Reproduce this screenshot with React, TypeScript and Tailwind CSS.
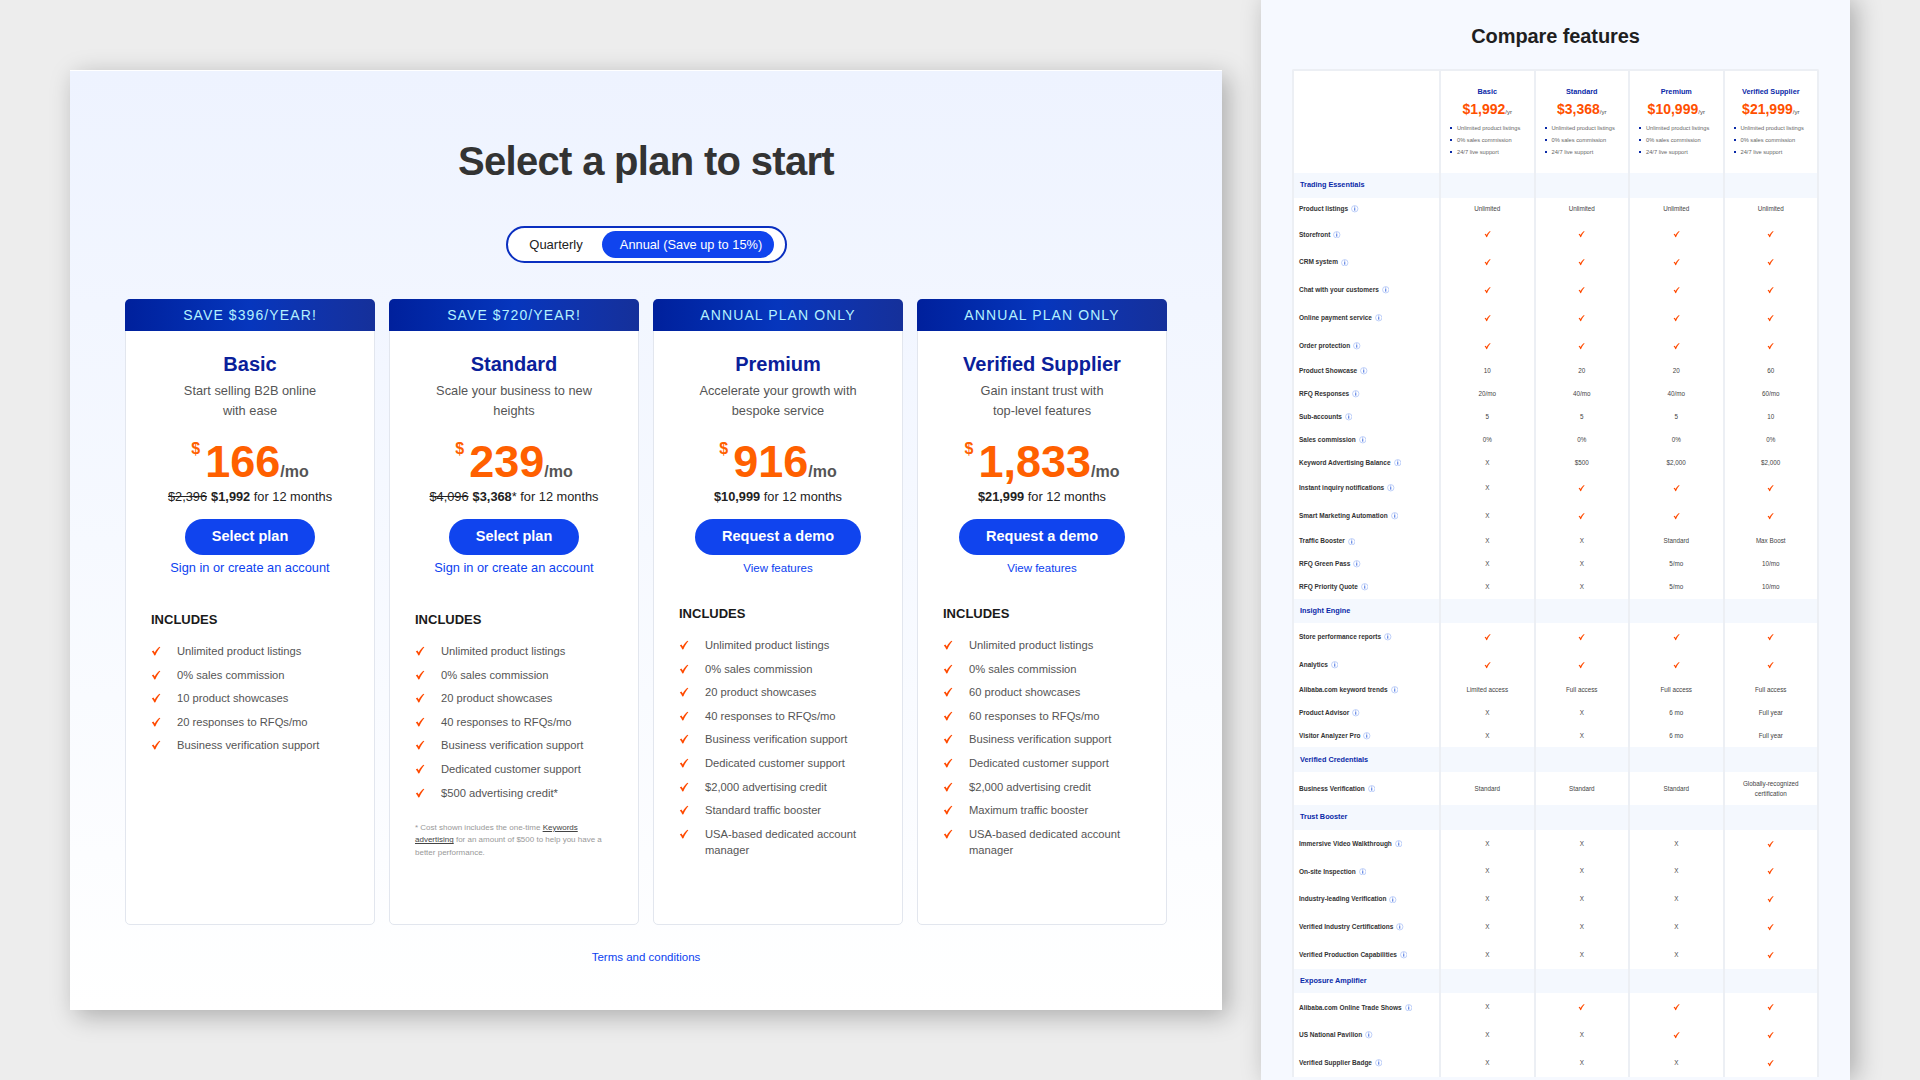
const CHECK = '✓';

const plans = [
  {
    banner: 'SAVE $396/YEAR!',
    name: 'Basic',
    desc: ['Start selling B2B online', 'with ease'],
    price: '166',
    was: '$2,396',
    total: '$1,992',
    star: false,
    cta: 'Select plan',
    link: 'Sign in or create an account',
    features: ['Unlimited product listings', '0% sales commission', '10 product showcases', '20 responses to RFQs/mo', 'Business verification support'],
  },
  {
    banner: 'SAVE $720/YEAR!',
    name: 'Standard',
    desc: ['Scale your business to new', 'heights'],
    price: '239',
    was: '$4,096',
    total: '$3,368',
    star: true,
    cta: 'Select plan',
    link: 'Sign in or create an account',
    features: ['Unlimited product listings', '0% sales commission', '20 product showcases', '40 responses to RFQs/mo', 'Business verification support', 'Dedicated customer support', '$500 advertising credit*'],
    footnote: true,
  },
  {
    banner: 'ANNUAL PLAN ONLY',
    name: 'Premium',
    desc: ['Accelerate your growth with', 'bespoke service'],
    price: '916',
    total: '$10,999',
    star: false,
    cta: 'Request a demo',
    link: 'View features',
    features: ['Unlimited product listings', '0% sales commission', '20 product showcases', '40 responses to RFQs/mo', 'Business verification support', 'Dedicated customer support', '$2,000 advertising credit', 'Standard traffic booster', 'USA-based dedicated account manager'],
  },
  {
    banner: 'ANNUAL PLAN ONLY',
    name: 'Verified Supplier',
    desc: ['Gain instant trust with', 'top-level features'],
    price: '1,833',
    total: '$21,999',
    star: false,
    cta: 'Request a demo',
    link: 'View features',
    features: ['Unlimited product listings', '0% sales commission', '60 product showcases', '60 responses to RFQs/mo', 'Business verification support', 'Dedicated customer support', '$2,000 advertising credit', 'Maximum traffic booster', 'USA-based dedicated account manager'],
  },
];

const columns = [
  { name: 'Basic', price: '$1,992' },
  { name: 'Standard', price: '$3,368' },
  { name: 'Premium', price: '$10,999' },
  { name: 'Verified Supplier', price: '$21,999' },
];

const sections: { title: string; rows: [string, string[]][] }[] = [
  {
    title: 'Trading Essentials',
    rows: [
      ['Product listings', ['Unlimited', 'Unlimited', 'Unlimited', 'Unlimited']],
      ['Storefront', [CHECK, CHECK, CHECK, CHECK]],
      ['CRM system', [CHECK, CHECK, CHECK, CHECK]],
      ['Chat with your customers', [CHECK, CHECK, CHECK, CHECK]],
      ['Online payment service', [CHECK, CHECK, CHECK, CHECK]],
      ['Order protection', [CHECK, CHECK, CHECK, CHECK]],
      ['Product Showcase', ['10', '20', '20', '60']],
      ['RFQ Responses', ['20/mo', '40/mo', '40/mo', '60/mo']],
      ['Sub-accounts', ['5', '5', '5', '10']],
      ['Sales commission', ['0%', '0%', '0%', '0%']],
      ['Keyword Advertising Balance', ['X', '$500', '$2,000', '$2,000']],
      ['Instant inquiry notifications', ['X', CHECK, CHECK, CHECK]],
      ['Smart Marketing Automation', ['X', CHECK, CHECK, CHECK]],
      ['Traffic Booster', ['X', 'X', 'Standard', 'Max Boost']],
      ['RFQ Green Pass', ['X', 'X', '5/mo', '10/mo']],
      ['RFQ Priority Quote', ['X', 'X', '5/mo', '10/mo']],
    ],
  },
  {
    title: 'Insight Engine',
    rows: [
      ['Store performance reports', [CHECK, CHECK, CHECK, CHECK]],
      ['Analytics', [CHECK, CHECK, CHECK, CHECK]],
      ['Alibaba.com keyword trends', ['Limited access', 'Full access', 'Full access', 'Full access']],
      ['Product Advisor', ['X', 'X', '6 mo', 'Full year']],
      ['Visitor Analyzer Pro', ['X', 'X', '6 mo', 'Full year']],
    ],
  },
  {
    title: 'Verified Credentials',
    rows: [['Business Verification', ['Standard', 'Standard', 'Standard', 'Globally-recognized certification']]],
  },
  {
    title: 'Trust Booster',
    rows: [
      ['Immersive Video Walkthrough', ['X', 'X', 'X', CHECK]],
      ['On-site Inspection', ['X', 'X', 'X', CHECK]],
      ['Industry-leading Verification', ['X', 'X', 'X', CHECK]],
      ['Verified Industry Certifications', ['X', 'X', 'X', CHECK]],
      ['Verified Production Capabilities', ['X', 'X', 'X', CHECK]],
    ],
  },
  {
    title: 'Exposure Amplifier',
    rows: [
      ['Alibaba.com Online Trade Shows', ['X', CHECK, CHECK, CHECK]],
      ['US National Pavilion', ['X', 'X', CHECK, CHECK]],
      ['Verified Supplier Badge', ['X', 'X', 'X', CHECK]],
    ],
  },
];

function Tick({ className }: { className: string }) {
  return (
    <svg viewBox="0 0 12 12" className={className} fill="#ff4a00">
      <path d="M1 6.6 L2.9 5.4 L4.5 7.7 C6 4.8 8 2.4 10.4 .8 L11.2 1.5 C8.8 4 6.8 7.4 5.3 11.2 L4 11.4 C3.3 9.4 2.2 7.8 1 6.6Z" />
    </svg>
  );
}

function Info() {
  return (
    <svg viewBox="0 0 8 8" className="ml-[3px] h-[7.5px] w-[7.5px] shrink-0" fill="none">
      <circle cx="4" cy="4" r="3.4" stroke="#a9c0f7" strokeWidth=".8" />
      <path d="M4 3.3 V6" stroke="#2f5fdc" strokeWidth="1" />
      <circle cx="4" cy="2.2" r=".55" fill="#2f5fdc" />
    </svg>
  );
}

function PlanCard({ plan }: { plan: (typeof plans)[number] }) {
  const demo = plan.cta === 'Request a demo';
  return (
    <div className="flex h-[626px] w-[250px] flex-col rounded-[5px] border border-[#e2e6ee] bg-white">
      <div className="-mx-px -mt-px flex h-[32px] shrink-0 items-center justify-center rounded-t-[5px] bg-gradient-to-r from-[#00209c] via-[#0636bd] to-[#15309a] text-[14px] tracking-[1.1px] text-[#b4f1ff]">
        {plan.banner}
      </div>
      <div className="flex flex-col items-center text-center">
        <div className="mt-[21px] h-[24px] text-[20px] leading-[24px] font-bold text-[#0a209a]">{plan.name}</div>
        <div className="mt-[5px] text-[12.8px] leading-[19.5px] text-[#555]">
          {plan.desc[0]}
          <br />
          {plan.desc[1]}
        </div>
        <div className="mt-[19px] flex h-[46px] items-baseline justify-center">
          <span className="mt-[1px] mr-[5px] self-start text-[16px] leading-[18px] font-bold text-[#ff6000]">$</span>
          <span className="text-[45px] leading-[46px] font-bold text-[#ff6000]">{plan.price}</span>
          <span className="text-[16px] font-bold text-[#555]">/mo</span>
        </div>
        <div className="mt-[4px] text-[12.8px] leading-[16px] text-[#222]">
          {plan.was && <span className="mr-[4px] line-through">{plan.was}</span>}
          <span className="font-bold">{plan.total}</span>
          {plan.star && '*'} for 12 months
        </div>
        <button
          className={`mt-[14px] h-[36px] rounded-full bg-[#1044ee] text-[14.5px] font-bold text-white ${demo ? 'w-[166px]' : 'w-[130px]'}`}
        >
          {plan.cta}
        </button>
        <a className={`mt-[5px] leading-[16px] text-[#0b3ff0] ${demo ? 'text-[11.5px]' : 'text-[12.8px]'}`}>{plan.link}</a>
      </div>
      <div className={`px-[25px] ${demo ? 'mt-[30px]' : 'mt-[36px]'}`}>
        <div className="text-[13px] leading-[16px] font-bold text-[#1a1a1a]">INCLUDES</div>
        <ul className="mt-[15px]">
          {plan.features.map((f) => (
            <li key={f} className="mb-[7.6px] flex text-[11.2px] leading-[16px] text-[#555]">
              <Tick className="mt-[3px] mr-[16px] h-[10px] w-[10px] shrink-0" />
              <span>{f}</span>
            </li>
          ))}
        </ul>
        {plan.footnote && (
          <p className="mt-[21px] text-[8px] leading-[12.8px] text-[#999]">
            * Cost shown includes the one-time <span className="text-[#444] underline">Keywords</span>{' '}
            <span className="text-[#444] underline">advertising</span> for an amount of $500 to help you have a better performance.
          </p>
        )}
      </div>
    </div>
  );
}

function ValueCell({ value }: { value: string }) {
  return (
    <div className="flex w-[94.5px] shrink-0 items-center justify-center border-l-2 border-[#eceff4] px-[10px] text-center text-[6.3px] leading-[10px] text-[#444]">
      {value === CHECK ? <Tick className="h-[8px] w-[7px]" /> : value}
    </div>
  );
}

function CompareTable() {
  return (
    <div className="mx-[31px] mt-[21px] rounded-t-[2px] border-t-2 border-r-2 border-l-2 border-[#eceff4] bg-white">
      <div className="flex h-[102px]">
        <div className="w-[145px] shrink-0" />
        {columns.map((c) => (
          <div key={c.name} className="w-[94.5px] shrink-0 border-l-2 border-[#eceff4] pt-[16px]">
            <div className="text-center text-[7.3px] leading-[10px] font-bold text-[#0a2aa8]">{c.name}</div>
            <div className="mt-[2px] text-center text-[14px] leading-[20px] font-bold text-[#ff5000]">
              {c.price}
              <span className="text-[6px] font-normal text-[#444]">/yr</span>
            </div>
            <ul className="mt-0 pl-[9px]">
              {['Unlimited product listings', '0% sales commission', '24/7 live support'].map((t) => (
                <li key={t} className="flex h-[12px] items-center text-[5.7px] text-[#666]">
                  <span className="mr-[5px] h-[2px] w-[2px] shrink-0 bg-[#0a2aa8]" />
                  {t}
                </li>
              ))}
            </ul>
          </div>
        ))}
      </div>
      {sections.map((s) => (
        <div key={s.title}>
          <div className="flex h-[24.6px] bg-[#f4f8fe]">
            <div className="flex w-[145px] shrink-0 items-center pt-[1px] pl-[6px] text-[7.3px] font-bold text-[#0a2aa8]">{s.title}</div>
            {columns.map((c) => (
              <div key={c.name} className="w-[94.5px] shrink-0 border-l-2 border-[#eceff4]" />
            ))}
          </div>
          {s.rows.map(([label, values]) => {
            const tall = values.includes(CHECK);
            const big = label === 'Business Verification';
            return (
              <div key={label} className={`flex ${big ? 'h-[33px]' : tall ? 'h-[27.85px]' : 'h-[22.9px]'}`}>
                <div className="flex w-[145px] shrink-0 items-center pl-[5px] text-[6.5px] font-bold text-[#333]">
                  {label}
                  <Info />
                </div>
                {values.map((v, i) => (
                  <ValueCell key={i} value={v} />
                ))}
              </div>
            );
          })}
        </div>
      ))}
    </div>
  );
}

export default function App() {
  return (
    <div className="flex h-[1080px] w-[1920px] items-start overflow-hidden bg-[#ededed] font-['Liberation_Sans',Arial,sans-serif]">
      <div className="mt-[70px] ml-[70px] flex h-[940px] w-[1152px] shrink-0 flex-col items-center border-t border-white bg-gradient-to-b from-[#eef3ff] via-[#f6f9ff] to-white shadow-[6px_6px_24px_rgba(0,0,0,0.28)]">
        <h1 className="mt-[66px] text-[40px] leading-[48px] font-bold tracking-[-0.7px] text-[#333]">Select a plan to start</h1>
        <div className="mt-[41px] flex h-[37px] w-[281px] items-center rounded-full border-2 border-[#0a2fc0] bg-white pr-[11px] pl-[3px]">
          <span className="w-[91px] text-center text-[13px] text-[#222]">Quarterly</span>
          <span className="flex h-[27px] flex-1 items-center justify-center rounded-full bg-[#1044ee] pl-[7px] text-[12.8px] text-white">Annual (Save up to 15%)</span>
        </div>
        <div className="mt-[36px] flex gap-[14px]">
          {plans.map((p) => (
            <PlanCard key={p.name} plan={p} />
          ))}
        </div>
        <a className="mt-[24px] text-[11.5px] leading-[16px] text-[#0b3ff0]">Terms and conditions</a>
      </div>
      <div className="ml-[39px] h-[1080px] w-[589px] shrink-0 overflow-hidden bg-[#f6f9ff] shadow-[6px_0_24px_rgba(0,0,0,0.28)]">
        <h2 className="mt-[24px] text-center text-[20px] leading-[24px] font-bold tracking-[-0.1px] text-[#1f1f1f]">Compare features</h2>
        <CompareTable />
      </div>
    </div>
  );
}
